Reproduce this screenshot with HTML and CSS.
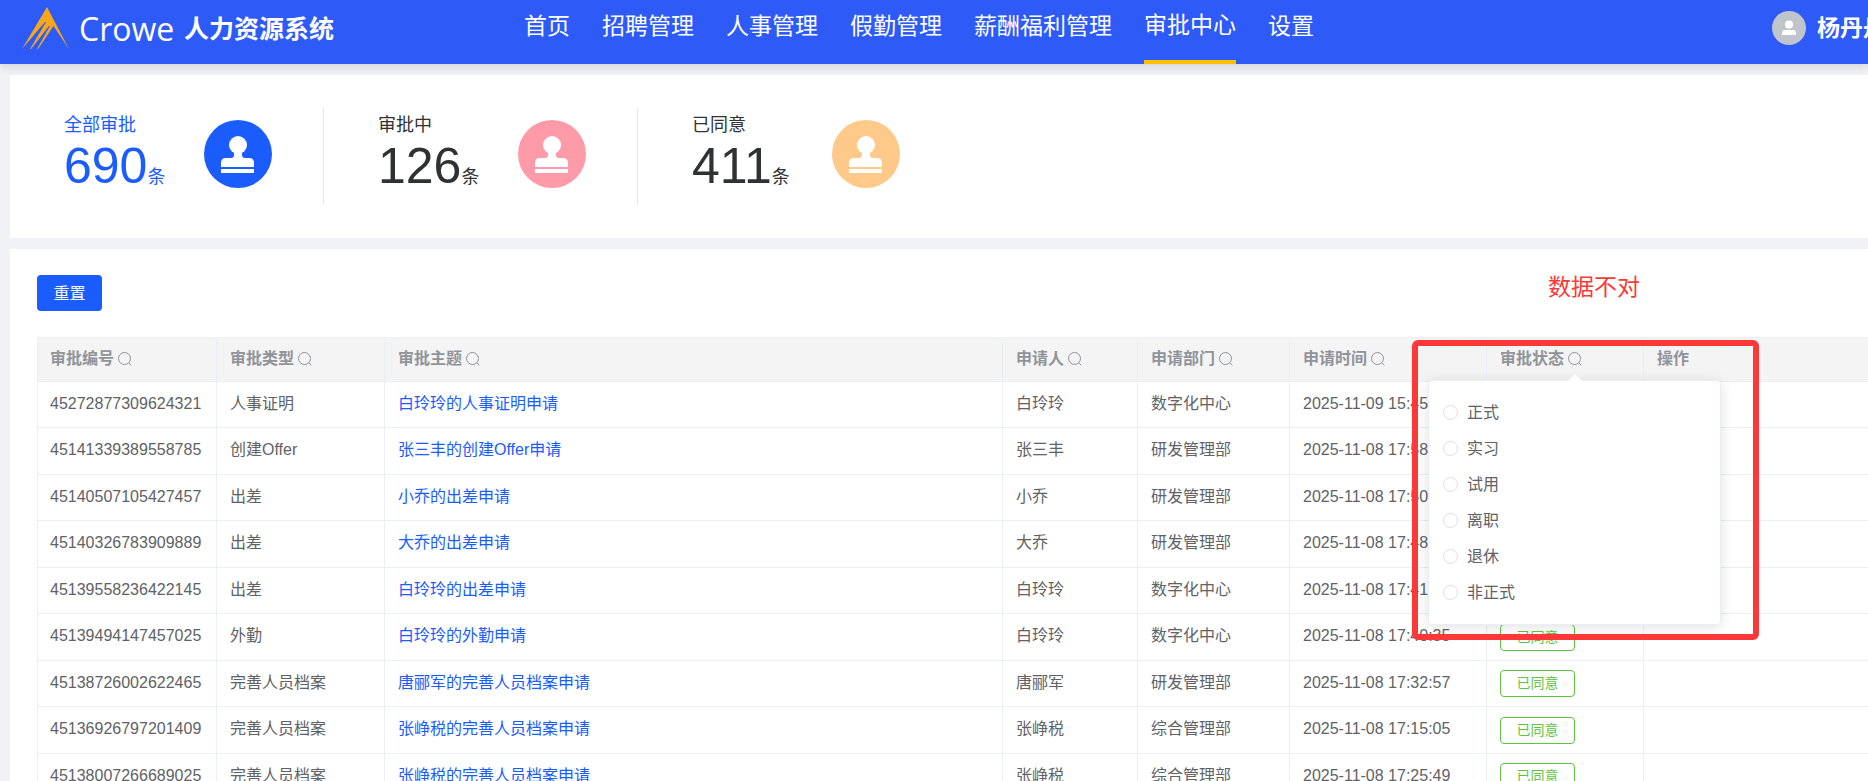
FILE: index.html
```html
<!DOCTYPE html>
<html lang="zh-CN">
  <head>
    <meta charset="UTF-8" />
    <title>人力资源系统</title>
    <link rel="stylesheet" href="styles.css" />
  </head>

  <body>
    <svg class="sprite" aria-hidden="true">
      <symbol id="icon-search" viewBox="0 0 14 14">
        <circle cx="6.500" cy="6.500" r="6" fill="none" stroke="currentColor" />
        <path d="M10.800 10.800 L13.400 13.400" stroke="currentColor" />
      </symbol>
      <symbol id="icon-stamp" viewBox="0 0 68 68">
        <circle cx="34" cy="34" r="34" fill="currentColor" />
        <circle cx="34" cy="25" r="9" fill="#fff" />
        <path d="M30 31 H38 V35 Q38 38 41 38 H45 Q50 38 50 43 V47 H17 V43 Q17 38 22 38 H27 Q30 38 30 35 Z" fill="#fff" />
        <rect x="17" y="49" width="33" height="4" fill="#fff" />
      </symbol>
    </svg>

    <header class="header">
      <div class="brand">
        <svg class="brand-mark" viewBox="0 0 48 43" aria-hidden="true">
          <path d="M25 0 L47 42 L31.500 19 L16 42 L15 42 L28 19 L27 19 L9 42 L8 42 L24 15 L23 15 L0 42 Z" fill="#f5a81c" />
        </svg>
        <span class="brand-name">Crowe</span>
        <span class="brand-title">人力资源系统</span>
      </div>
      <nav class="nav">
        <a href="#">首页</a>
        <a href="#">招聘管理</a>
        <a href="#">人事管理</a>
        <a href="#">假勤管理</a>
        <a href="#">薪酬福利管理</a>
        <a href="#" class="active">审批中心</a>
        <a href="#">设置</a>
      </nav>
      <div class="user">
        <svg class="avatar" viewBox="0 0 34 34" aria-hidden="true">
          <circle cx="17" cy="17" r="17" fill="#c0c4cc" />
          <circle cx="17" cy="13.500" r="4" fill="#fff" />
          <path d="M10 24 V22 Q10 19 13 19 H21 Q24 19 24 22 V24 Z" fill="#fff" />
        </svg>
        <span>杨丹丹</span>
      </div>
    </header>

    <main class="main">
      <section class="stats">
        <div class="stat active">
          <div class="stat-text">
            <div class="stat-label">全部审批</div>
            <div class="stat-count"><b>690</b>条</div>
          </div>
          <svg class="stat-icon blue"><use href="#icon-stamp" /></svg>
        </div>
        <div class="stat">
          <div class="stat-text">
            <div class="stat-label">审批中</div>
            <div class="stat-count"><b>126</b>条</div>
          </div>
          <svg class="stat-icon pink"><use href="#icon-stamp" /></svg>
        </div>
        <div class="stat">
          <div class="stat-text">
            <div class="stat-label">已同意</div>
            <div class="stat-count"><b>411</b>条</div>
          </div>
          <svg class="stat-icon orange"><use href="#icon-stamp" /></svg>
        </div>
      </section>

      <section class="list">
        <button type="button" class="btn-reset">重置</button>

        <table class="table">
          <colgroup>
            <col class="col-id" />
            <col class="col-type" />
            <col class="col-subject" />
            <col class="col-person" />
            <col class="col-dept" />
            <col class="col-time" />
            <col class="col-status" />
            <col />
          </colgroup>
          <thead>
            <tr>
              <th>审批编号<svg class="search"><use href="#icon-search" /></svg></th>
              <th>审批类型<svg class="search"><use href="#icon-search" /></svg></th>
              <th>审批主题<svg class="search"><use href="#icon-search" /></svg></th>
              <th>申请人<svg class="search"><use href="#icon-search" /></svg></th>
              <th>申请部门<svg class="search"><use href="#icon-search" /></svg></th>
              <th>申请时间<svg class="search"><use href="#icon-search" /></svg></th>
              <th>审批状态<svg class="search"><use href="#icon-search" /></svg></th>
              <th>操作</th>
            </tr>
          </thead>
          <tbody>
            <tr>
              <td>45272877309624321</td>
              <td>人事证明</td>
              <td><a href="#">白玲玲的人事证明申请</a></td>
              <td>白玲玲</td>
              <td>数字化中心</td>
              <td>2025-11-09 15:45</td>
              <td></td>
              <td></td>
            </tr>
            <tr>
              <td>45141339389558785</td>
              <td>创建Offer</td>
              <td><a href="#">张三丰的创建Offer申请</a></td>
              <td>张三丰</td>
              <td>研发管理部</td>
              <td>2025-11-08 17:58</td>
              <td></td>
              <td></td>
            </tr>
            <tr>
              <td>45140507105427457</td>
              <td>出差</td>
              <td><a href="#">小乔的出差申请</a></td>
              <td>小乔</td>
              <td>研发管理部</td>
              <td>2025-11-08 17:50</td>
              <td></td>
              <td></td>
            </tr>
            <tr>
              <td>45140326783909889</td>
              <td>出差</td>
              <td><a href="#">大乔的出差申请</a></td>
              <td>大乔</td>
              <td>研发管理部</td>
              <td>2025-11-08 17:48</td>
              <td></td>
              <td></td>
            </tr>
            <tr>
              <td>45139558236422145</td>
              <td>出差</td>
              <td><a href="#">白玲玲的出差申请</a></td>
              <td>白玲玲</td>
              <td>数字化中心</td>
              <td>2025-11-08 17:41</td>
              <td></td>
              <td></td>
            </tr>
            <tr>
              <td>45139494147457025</td>
              <td>外勤</td>
              <td><a href="#">白玲玲的外勤申请</a></td>
              <td>白玲玲</td>
              <td>数字化中心</td>
              <td>2025-11-08 17:40:35</td>
              <td><span class="tag">已同意</span></td>
              <td></td>
            </tr>
            <tr>
              <td>45138726002622465</td>
              <td>完善人员档案</td>
              <td><a href="#">唐郦军的完善人员档案申请</a></td>
              <td>唐郦军</td>
              <td>研发管理部</td>
              <td>2025-11-08 17:32:57</td>
              <td><span class="tag">已同意</span></td>
              <td></td>
            </tr>
            <tr>
              <td>45136926797201409</td>
              <td>完善人员档案</td>
              <td><a href="#">张峥税的完善人员档案申请</a></td>
              <td>张峥税</td>
              <td>综合管理部</td>
              <td>2025-11-08 17:15:05</td>
              <td><span class="tag">已同意</span></td>
              <td></td>
            </tr>
            <tr>
              <td>45138007266689025</td>
              <td>完善人员档案</td>
              <td><a href="#">张峥税的完善人员档案申请</a></td>
              <td>张峥税</td>
              <td>综合管理部</td>
              <td>2025-11-08 17:25:49</td>
              <td><span class="tag">已同意</span></td>
              <td></td>
            </tr>
          </tbody>
        </table>

        <!-- status filter -->
        <div class="popover">
          <label><input type="radio" name="status" />正式</label>
          <label><input type="radio" name="status" />实习</label>
          <label><input type="radio" name="status" />试用</label>
          <label><input type="radio" name="status" />离职</label>
          <label><input type="radio" name="status" />退休</label>
          <label><input type="radio" name="status" />非正式</label>
        </div>

        <div class="mark-box"></div>
        <div class="mark-text">数据不对</div>
      </section>
    </main>
  </body>
</html>
```

FILE: styles.css
```css
* {
  box-sizing: border-box;
}
html,
body {
  height: 100%;
}
body {
  margin: 0;
  background-color: #f0f2f5;
  color: #606266;
  font-family: "Liberation Sans", "Noto Sans CJK SC", sans-serif;
  font-size: 16px;
  overflow: hidden;
}
a {
  text-decoration: none;
}
.sprite {
  position: absolute;
  width: 0;
  height: 0;
}

/* header */
.header {
  display: flex;
  height: 64px;
  background-color: #2e5bf8;
  color: #fff;
  box-shadow: 0 2px 10px rgba(0, 0, 0, 0.15);
}
.brand {
  display: flex;
  align-items: center;
  width: 524px;
  height: 56px;
  padding-left: 22px;
}
.brand-mark {
  width: 48px;
  height: 43px;
}
.brand-name {
  width: 114px;
  padding: 2px 0 0 9px;
  font-family: "Open Sans", sans-serif;
  font-size: 32px;
  line-height: 48px;
}
.brand-title {
  padding-bottom: 2px;
  font-size: 25px;
  font-weight: bold;
}
.nav {
  display: flex;
  gap: 32px;
}
.nav a {
  height: 64px;
  color: #fff;
  font-size: 23px;
  line-height: 52px;
  white-space: nowrap;
}
.nav .active {
  line-height: 50px;
  border-bottom: 4px solid #ffc000;
}
.user {
  display: flex;
  align-items: center;
  gap: 11px;
  width: 96px;
  height: 56px;
  margin-left: auto;
  overflow: hidden;
  font-size: 23px;
  line-height: 32px;
  font-weight: bold;
  white-space: nowrap;
}
.avatar {
  flex: none;
  width: 34px;
  height: 34px;
}

/* statistics */
.main {
  padding: 11px 0 0 10px;
}
.stats {
  display: flex;
  height: 163px;
  padding: 33px 0;
  background-color: #fff;
}
.stat {
  display: flex;
  width: 314px;
  padding-left: 54px;
  border-right: 1px solid #e4e7ed;
  color: #303133;
}
.stat:last-child {
  border-right: none;
}
.stat.active {
  color: #1b5cff;
}
.stat-text {
  width: 140px;
  white-space: nowrap;
}
.stat-label {
  font-size: 18px;
  line-height: 34px;
}
.stat-count {
  font-size: 18px;
  line-height: 48px;
}
.stat-count b {
  font-size: 50px;
  font-weight: normal;
}
.stat-icon {
  width: 68px;
  height: 68px;
  margin-top: 12px;
}
.blue {
  color: #1b5cff;
}
.pink {
  color: #ff9aa8;
}
.orange {
  color: #ffc98a;
}

/* list */
.list {
  position: relative;
  margin-top: 11px;
  padding: 26px 0 0 27px;
  background-color: #fff;
}
.btn-reset {
  display: block;
  width: 65px;
  height: 36px;
  padding: 0 0 2px;
  border: none;
  border-radius: 4px;
  background-color: #1b5cff;
  color: #fff;
  font-family: inherit;
  font-size: 16px;
  cursor: pointer;
}
.table {
  width: 100%;
  margin-top: 26px;
  border-top: 1px solid #ebeef5;
  border-left: 1px solid #ebeef5;
  border-collapse: separate;
  border-spacing: 0;
  table-layout: fixed;
}
.col-id {
  width: 179px;
}
.col-type {
  width: 168px;
}
.col-subject {
  width: 618px;
}
.col-person {
  width: 135px;
}
.col-dept {
  width: 152px;
}
.col-time {
  width: 197px;
}
.col-status {
  width: 157px;
}
.table th,
.table td {
  height: 47px;
  padding: 0 0 2px 13px;
  border-right: 1px solid #ebeef5;
  border-bottom: 1px solid #ebeef5;
  line-height: 24px;
  text-align: left;
  white-space: nowrap;
}
.table th:first-child,
.table td:first-child {
  padding-left: 12px;
}
.table th:last-child,
.table td:last-child {
  border-right: none;
}
.table th {
  height: 44px;
  background-color: #f4f4f5;
  color: #909399;
}
.table tr:nth-child(odd) td {
  height: 46px;
}
.table a {
  color: #1b5cff;
}
.search {
  width: 14px;
  height: 14px;
  margin-left: 4px;
  vertical-align: -2px;
}
.tag {
  display: block;
  width: 75px;
  height: 27px;
  margin-top: 2px;
  border: 1px solid #5fc442;
  border-radius: 4px;
  color: #5fc442;
  font-size: 14px;
  line-height: 24px;
  text-align: center;
}

/* filter popover */
.popover {
  position: absolute;
  top: 131px;
  left: 1418px;
  width: 293px;
  padding: 13px 14px 14px;
  border: 1px solid #ebeef5;
  border-radius: 4px;
  background-color: #fff;
  box-shadow: 0 2px 14px rgba(0, 0, 0, 0.12);
}
.popover::before {
  content: "";
  position: absolute;
  top: -7px;
  left: 139px;
  border: 7px solid transparent;
  border-top: none;
  border-bottom-color: #fff;
}
.popover label {
  display: flex;
  align-items: center;
  gap: 9px;
  height: 36px;
  padding-bottom: 2px;
}
.popover input {
  appearance: none;
  width: 15px;
  height: 15px;
  margin: 2px 0 0;
  border: 1px solid #dcdfe6;
  border-radius: 50%;
  background-color: #fff;
}

/* review mark */
.mark-box {
  position: absolute;
  top: 91px;
  left: 1402px;
  width: 347px;
  height: 300px;
  border: 6px solid #fc3838;
  border-radius: 6px;
}
.mark-text {
  position: absolute;
  top: 19px;
  left: 1538px;
  color: #fc3838;
  font-size: 23px;
}
```
